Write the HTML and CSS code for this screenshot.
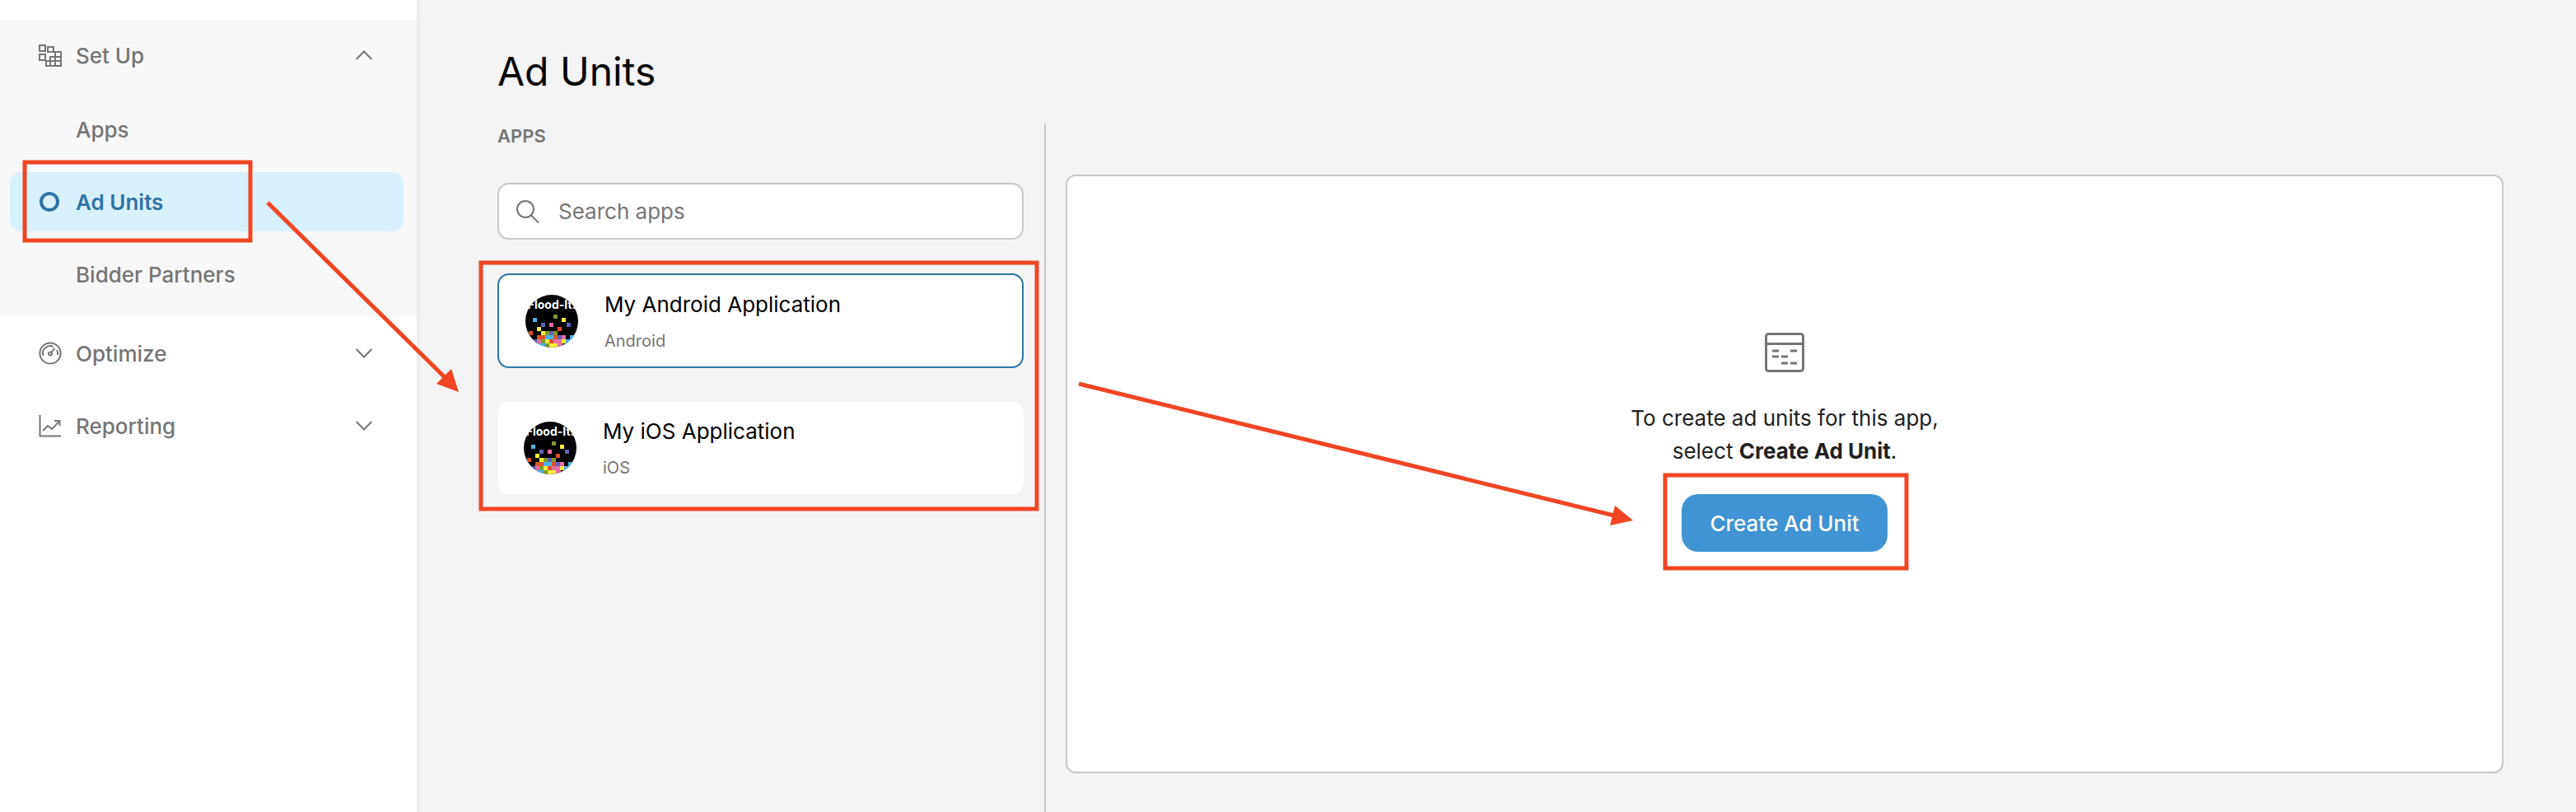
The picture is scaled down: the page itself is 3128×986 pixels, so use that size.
FILE: index.html
```html
<!DOCTYPE html>
<html lang="en">
<head>
    <meta charset="UTF-8">
    <title>Ad Units</title>
    <link rel="stylesheet" href="styles.css">
</head>
<body>
    <svg class="defs" width="0" height="0">
        <symbol id="flood" viewBox="0 0 64 64">
            <rect x="9" y="28" width="5" height="5" fill="#4fb3e8"/>
            <rect x="34" y="24" width="5" height="5" fill="#7f9a2c"/>
            <rect x="44" y="28" width="5" height="5" fill="#f5ee3a"/>
            <rect x="19" y="34" width="5" height="5" fill="#5f5fb5"/>
            <rect x="29" y="34" width="5" height="5" fill="#e56fa8"/>
            <rect x="50" y="34" width="5" height="5" fill="#5f5fb5"/>
            <rect x="14" y="39" width="5" height="5" fill="#f5ee3a"/>
            <rect x="39" y="39" width="5" height="5" fill="#dc5128"/>
            <rect x="4" y="44" width="5" height="5" fill="#dc5128"/>
            <rect x="19" y="44" width="5" height="5" fill="#f5ee3a"/>
            <rect x="24" y="44" width="5" height="5" fill="#7f9a2c"/>
            <rect x="29" y="44" width="5" height="5" fill="#5f5fb5"/>
            <rect x="34" y="44" width="5" height="5" fill="#7f9a2c"/>
            <rect x="14" y="49" width="10" height="5" fill="#dc5128"/>
            <rect x="24" y="49" width="10" height="5" fill="#4fb3e8"/>
            <rect x="34" y="49" width="5" height="5" fill="#dc5128"/>
            <rect x="39" y="49" width="5" height="5" fill="#5f5fb5"/>
            <rect x="44" y="49" width="5" height="5" fill="#e56fa8"/>
            <rect x="54" y="49" width="5" height="5" fill="#4fb3e8"/>
            <rect x="9" y="54" width="5" height="5" fill="#5f5fb5"/>
            <rect x="14" y="54" width="5" height="5" fill="#e56fa8"/>
            <rect x="19" y="54" width="5" height="5" fill="#7f9a2c"/>
            <rect x="24" y="54" width="5" height="5" fill="#f5ee3a"/>
            <rect x="29" y="54" width="5" height="5" fill="#dc5128"/>
            <rect x="34" y="54" width="10" height="5" fill="#e56fa8"/>
            <rect x="44" y="54" width="5" height="5" fill="#f5ee3a"/>
            <rect x="49" y="54" width="6" height="5" fill="#4fb3e8"/>
            <rect x="14" y="59" width="10" height="5" fill="#4fb3e8"/>
            <rect x="24" y="59" width="5" height="5" fill="#7f9a2c"/>
            <rect x="29" y="59" width="10" height="5" fill="#f5ee3a"/>
            <rect x="39" y="59" width="6" height="5" fill="#e56fa8"/>
        </symbol>
    </svg>

    <div class="page">
        <aside class="sidebar">
            <div class="nav-group">
                <div class="nav-row nav-head">
                    <svg class="nav-icon" viewBox="0 0 28 28">
                        <path d="M1 2h7v7H1zM11 4h7v6h-7zM1 13h7v7H1zM20 10h7v17H9v-6h5v-5h6zM20 16v11M14 16h13M14 21v6M9 21h18" />
                    </svg>
                    <span class="nav-label">Set Up</span>
                    <svg class="chevron" viewBox="0 0 20 12"><path d="M0.7 11L10 1.500L19.300 11"/></svg>
                </div>
                <div class="nav-row nav-sub">Apps</div>
                <div class="nav-row nav-sub active">
                    <span class="dot"></span>
                    <span>Ad Units</span>
                </div>
                <div class="nav-row nav-sub">Bidder Partners</div>
            </div>
            <div class="nav-rest">
                <div class="nav-row nav-head">
                    <svg class="nav-icon" viewBox="0 0 28 28">
                        <circle cx="14" cy="14" r="12.600"/>
                        <path d="M5.500 17a8.800 8.800 0 0 1 12-11M22 10a9 9 0 0 1 1 6M15.200 12.800l4.300-4.800"/>
                        <circle cx="14" cy="14.500" r="2"/>
                    </svg>
                    <span class="nav-label">Optimize</span>
                    <svg class="chevron" viewBox="0 0 20 12"><path d="M0.7 1L10 10.500L19.300 1"/></svg>
                </div>
                <div class="nav-row nav-head">
                    <svg class="nav-icon" viewBox="0 0 28 28">
                        <path d="M1.500 1v25.500H27M5 20l6-6 5 4 9-9.500M19 8h6.500v6"/>
                    </svg>
                    <span class="nav-label">Reporting</span>
                    <svg class="chevron" viewBox="0 0 20 12"><path d="M0.7 1L10 10.500L19.300 1"/></svg>
                </div>
            </div>
        </aside>

        <main class="content">
            <h1>Ad Units</h1>
            <div class="columns">
                <section class="apps-col">
                    <div class="apps-label">APPS</div>
                    <div class="search">
                        <svg class="search-icon" viewBox="0 0 28 28">
                            <circle cx="11" cy="11" r="10"/>
                            <path d="M18 18.500l9 9"/>
                        </svg>
                        <span>Search apps</span>
                    </div>
                    <div class="app-card selected">
                        <svg class="avatar" viewBox="0 0 64 64">
                            <rect width="64" height="64"/>
                            <text x="32" y="17" class="flood-text">Flood-It!</text>
                            <use href="#flood"/>
                        </svg>
                        <div class="app-info">
                            <div class="app-name">My Android Application</div>
                            <div class="app-os">Android</div>
                        </div>
                    </div>
                    <div class="app-card second">
                        <svg class="avatar" viewBox="0 0 64 64">
                            <rect width="64" height="64"/>
                            <text x="32" y="17" class="flood-text">Flood-It!</text>
                            <use href="#flood"/>
                        </svg>
                        <div class="app-info">
                            <div class="app-name">My iOS Application</div>
                            <div class="app-os">iOS</div>
                        </div>
                    </div>
                </section>
                <section class="panel">
                    <svg class="panel-icon" viewBox="0 0 48 48">
                        <rect x="1.500" y="1.500" width="45" height="45" rx="3"/>
                        <path d="M1.500 13.500h45"/>
                        <path class="dashes" d="M9 22h8M31 22h8M9 29h8M20 29h8M20 37h8M31 37h8"/>
                    </svg>
                    <p class="panel-text">To create ad units for this app,<br>select <b>Create Ad Unit</b>.</p>
                    <button class="create-btn">Create Ad Unit</button>
                </section>
            </div>
        </main>
    </div>

    <!-- red annotations drawn on top of the screenshot -->
    <svg class="notes" width="3128" height="986" viewBox="0 0 3128 986">
        <rect x="30" y="197" width="274" height="95"/>
        <rect x="584" y="319" width="675" height="299"/>
        <rect x="2022" y="577" width="293" height="113"/>
        <path d="M325 246L544 462"/>
        <path class="head" d="M557 476L530 466L548 448Z"/>
        <path d="M1310 466L1960 626"/>
        <path class="head" d="M1983 632L1955 638L1961 614Z"/>
    </svg>
</body>
</html>
```

FILE: styles.css
```css
* {
    box-sizing: border-box;
}
html, body {
    margin: 0;
    height: 986px;
    overflow: hidden;
}
body {
    position: relative;
    font-family: Inter, "Liberation Sans", sans-serif;
    background-color: #f4f4f4;
}
.defs {
    display: block;
    height: 0;
}
.page {
    display: flex;
    height: 986px;
}

/* sidebar */
.sidebar {
    width: 510px;
    flex-shrink: 0;
    padding-top: 24px;
    background-color: white;
    border-right: 4px solid #ececec;
}
.nav-group {
    display: flex;
    flex-direction: column;
    gap: 16px;
    padding: 7px 0 16px;
    background-color: #f8f8f8;
}
.nav-rest {
    display: flex;
    flex-direction: column;
    gap: 16px;
    padding-top: 8px;
}
.nav-row {
    display: flex;
    align-items: center;
    height: 72px;
    margin: 0 16px 0 12px;
    padding-left: 35px;
    font-size: 26px;
    font-weight: 500;
    color: #757575;
    border-radius: 14px;
}
.nav-head + .nav-sub {
    margin-top: 2px;
}
.nav-sub {
    padding-left: 80px;
}
.nav-sub.active {
    padding-left: 36px;
    gap: 20px;
    background-color: #d9f0fd;
    color: #2c73a8;
    font-weight: 600;
}
.dot {
    width: 24px;
    height: 24px;
    border: 4px solid #2c73a8;
    border-radius: 50%;
}
.nav-icon {
    width: 28px;
    height: 28px;
    flex-shrink: 0;
    fill: none;
    stroke: #757575;
    stroke-width: 2;
}
.nav-label {
    flex: 1;
    margin-left: 17px;
}
.chevron {
    width: 20px;
    height: 12px;
    margin-right: 38px;
    fill: none;
    stroke: #757575;
    stroke-width: 2;
}

/* main area */
.content {
    flex: 1;
    padding-left: 94px;
}
h1 {
    height: 150px;
    margin: 0;
    padding-top: 58px;
    font-size: 48px;
    line-height: 58px;
    font-weight: 400;
    color: black;
}
.columns {
    display: flex;
    height: 836px;
}
.apps-col {
    width: 666px;
    flex-shrink: 0;
    padding-right: 25px;
    border-right: 2px solid #c8c8c8;
}
.apps-label {
    height: 72px;
    padding-top: 3px;
    font-size: 22px;
    line-height: 24px;
    font-weight: 600;
    color: #757575;
}
.search {
    display: flex;
    align-items: center;
    gap: 23px;
    height: 69px;
    padding-left: 21px;
    background-color: white;
    border: 2px solid #c8c8c8;
    border-radius: 14px;
    font-size: 26px;
    color: #757575;
}
.search-icon {
    width: 28px;
    height: 28px;
    fill: none;
    stroke: #757575;
    stroke-width: 2;
}
.app-card {
    display: flex;
    align-items: center;
    gap: 32px;
    width: 639px;
    height: 115px;
    margin-top: 41px;
    padding-left: 32px;
    background-color: white;
    border: 2px solid white;
    border-radius: 14px;
}
.app-card.selected {
    border-color: #2c73a8;
}
.app-card.second {
    height: 112px;
    margin-top: 41px;
    padding-left: 30px;
}
.avatar {
    width: 64px;
    height: 64px;
    flex-shrink: 0;
    border-radius: 50%;
}
.flood-text {
    font-family: Inter, sans-serif;
    font-size: 14px;
    font-weight: 700;
    fill: white;
    text-anchor: middle;
}
.app-name {
    font-size: 26px;
    line-height: 32px;
    color: black;
}
.app-os {
    margin-top: 16px;
    font-size: 20px;
    line-height: 24px;
    color: #757575;
}

/* empty state panel */
.panel {
    display: flex;
    flex-direction: column;
    align-items: center;
    width: 1746px;
    height: 727px;
    margin: 62px 0 0 24px;
    padding-top: 190px;
    background-color: white;
    border: 2px solid #c8c8c8;
    border-radius: 12px;
}
.panel-icon {
    width: 48px;
    height: 48px;
    fill: none;
    stroke: #757575;
    stroke-width: 3;
}
.panel-text {
    margin: 36px 0 0;
    font-size: 26px;
    line-height: 40px;
    text-align: center;
    color: #212121;
}
.panel-text b {
    font-weight: 700;
}
.create-btn {
    width: 250px;
    height: 70px;
    margin-top: 32px;
    border: none;
    border-radius: 20px;
    background-color: #4094d3;
    color: white;
    font-family: inherit;
    font-size: 26px;
    font-weight: 500;
}

.notes {
    position: absolute;
    top: 0;
    left: 0;
    pointer-events: none;
    fill: none;
    stroke: #f04524;
    stroke-width: 5;
}
.notes .head {
    fill: #f04524;
    stroke: none;
}
```
